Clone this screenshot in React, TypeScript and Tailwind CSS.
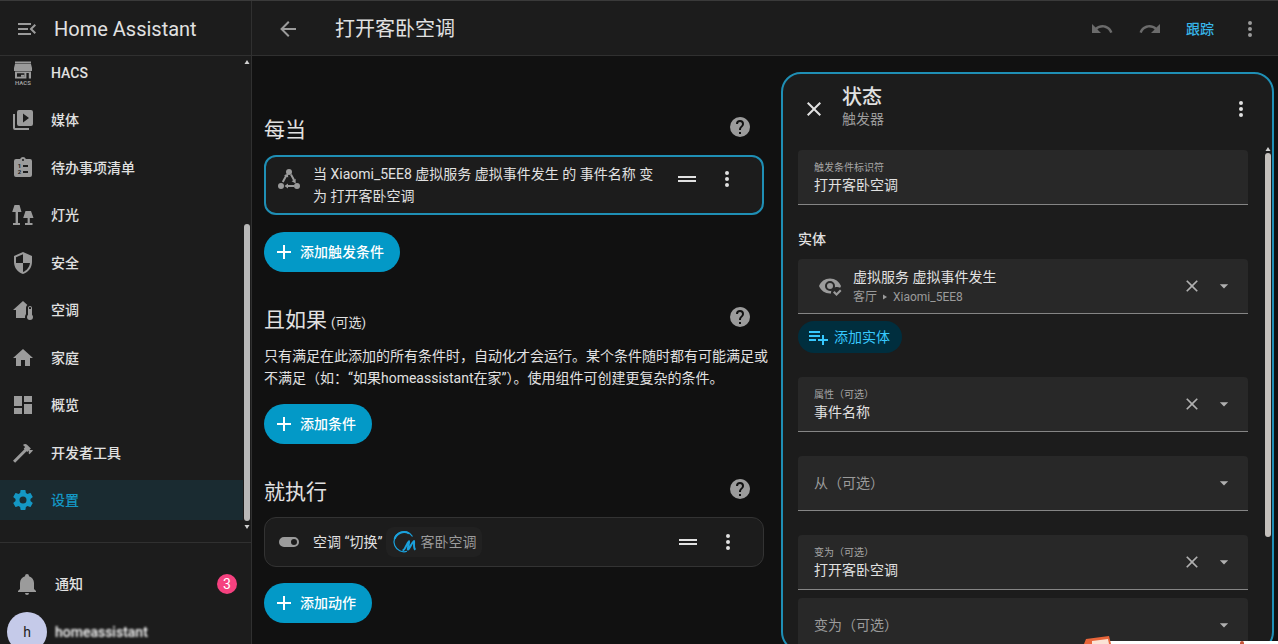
import type { ReactNode } from "react";

const PATHS = {
  menuOpen: "M21,15.61L19.59,17L14.58,12L19.59,7L21,8.39L17.44,12L21,15.61M3,6H16V8H3V6M3,13V11H13V13H3M3,18V16H16V18H3Z",
  media: "M4,6H2V20A2,2 0 0,0 4,22H18V20H4V6M20,2H8A2,2 0 0,0 6,4V16A2,2 0 0,0 8,18H20A2,2 0 0,0 22,16V4A2,2 0 0,0 20,2M12,14.5V5.5L18,10L12,14.5Z",
  lamps: "M3.5,2H8.5L10.5,9H7V20H9V22H2V20H4.6V9H1.2L3.5,2M14.5,8H20L22.5,15H18.8V20H21.5V22H14V20H16.6V15H12.2L14.5,8Z",
  security: "M12,12H19C18.47,16.11 15.72,19.78 12,20.92V12H5V6.3L12,3.19M12,1L3,5V11C3,16.55 6.84,21.73 12,23C17.16,21.73 21,16.55 21,11V5L12,1Z",
  climate: "M19,8C20.11,8 21,8.9 21,10V16.76C21.61,17.31 22,18.11 22,19A3,3 0 0,1 16,19C16,18.11 16.39,17.31 17,16.76V10C17,8.9 17.9,8 19,8M19,9C18.45,9 18,9.45 18,10V11H20V10C20,9.45 19.55,9 19,9M5,20V12H2L12,3L16.4,6.96C15.54,7.69 15,8.78 15,10V16C14.37,16.83 14,17.87 14,19L14.1,20H5Z",
  home: "M10,20V14H14V20H19V12H22L12,3L2,12H5V20H10Z",
  dashboard: "M13,3V9H21V3M13,21H21V11H13M3,21H11V15H3M3,13H11V3H3V13Z",
  hammer: "M2,19.63L13.43,8.2L12.72,7.5L14.14,6.07L12,3.89C13.2,2.7 15.09,2.7 16.27,3.89L19.87,7.5L18.45,8.91H21.29L22,9.62L18.45,13.21L17.74,12.5V9.62L16.27,11.04L15.56,10.33L4.13,21.76L2,19.63Z",
  cog: "M12,15.5A3.5,3.5 0 0,1 8.5,12A3.5,3.5 0 0,1 12,8.5A3.5,3.5 0 0,1 15.5,12A3.5,3.5 0 0,1 12,15.5M19.43,12.97C19.47,12.65 19.5,12.33 19.5,12C19.5,11.67 19.47,11.34 19.43,11L21.54,9.37C21.73,9.22 21.78,8.95 21.66,8.73L19.66,5.27C19.54,5.05 19.27,4.96 19.05,5.05L16.56,6.05C16.04,5.66 15.5,5.32 14.87,5.07L14.5,2.42C14.46,2.18 14.25,2 14,2H10C9.75,2 9.54,2.18 9.5,2.42L9.13,5.07C8.5,5.32 7.96,5.66 7.44,6.05L4.95,5.05C4.73,4.96 4.46,5.05 4.34,5.27L2.34,8.73C2.21,8.95 2.27,9.22 2.46,9.37L4.57,11C4.53,11.34 4.5,11.67 4.5,12C4.5,12.33 4.53,12.65 4.57,12.97L2.46,14.63C2.27,14.78 2.21,15.05 2.34,15.27L4.34,18.73C4.46,18.95 4.73,19.03 4.95,18.95L7.44,17.94C7.96,18.34 8.5,18.68 9.13,18.93L9.5,21.58C9.54,21.82 9.75,22 10,22H14C14.25,22 14.46,21.82 14.5,21.58L14.87,18.93C15.5,18.67 16.04,18.34 16.56,17.94L19.05,18.95C19.27,19.03 19.54,18.95 19.66,18.73L21.66,15.27C21.78,15.05 21.73,14.78 21.54,14.63L19.43,12.97Z",
  bell: "M21,19V20H3V19L5,17V11C5,7.9 7.03,5.17 10,4.29C10,4.19 10,4.1 10,4A2,2 0 0,1 12,2A2,2 0 0,1 14,4C14,4.1 14,4.19 14,4.29C16.97,5.17 19,7.9 19,11V17L21,19M14,21A2,2 0 0,1 12,23A2,2 0 0,1 10,21",
  back: "M20,11V13H8L13.5,18.5L12.08,19.92L4.16,12L12.08,4.08L13.5,5.5L8,11H20Z",
  undo: "M12.5,8C9.85,8 7.45,9 5.6,10.6L2,7V16H11L7.38,12.38C8.77,11.22 10.54,10.5 12.5,10.5C16.04,10.5 19.05,12.81 20.1,16L22.47,15.22C21.08,11.03 17.15,8 12.5,8Z",
  redo: "M18.4,10.6C16.55,9 14.15,8 11.5,8C6.85,8 2.92,11.03 1.54,15.22L3.9,16C4.95,12.81 7.95,10.5 11.5,10.5C13.45,10.5 15.23,11.22 16.62,12.38L13,16H22V7L18.4,10.6Z",
  dots: "M12,16A2,2 0 0,1 14,18A2,2 0 0,1 12,20A2,2 0 0,1 10,18A2,2 0 0,1 12,16M12,10A2,2 0 0,1 14,12A2,2 0 0,1 12,14A2,2 0 0,1 10,12A2,2 0 0,1 12,10M12,4A2,2 0 0,1 14,6A2,2 0 0,1 12,8A2,2 0 0,1 10,6A2,2 0 0,1 12,4Z",
  help: "M15.07,11.25L14.17,12.17C13.45,12.89 13,13.5 13,15H11V14.5C11,13.39 11.45,12.39 12.17,11.67L13.41,10.41C13.78,10.05 14,9.55 14,9C14,7.89 13.1,7 12,7A2,2 0 0,0 10,9H8A4,4 0 0,1 12,5A4,4 0 0,1 16,9C16,9.88 15.64,10.67 15.07,11.25M13,19H11V17H13M12,2A10,10 0 0,0 2,12A10,10 0 0,0 12,22A10,10 0 0,0 22,12C22,6.47 17.5,2 12,2Z",
  drag: "M21,11H3V9H21V11M21,13H3V15H21V13Z",
  toggle: "M17,7H7A5,5 0 0,0 2,12A5,5 0 0,0 7,17H17A5,5 0 0,0 22,12A5,5 0 0,0 17,7M17,15A3,3 0 0,1 14,12A3,3 0 0,1 17,9A3,3 0 0,1 20,12A3,3 0 0,1 17,15Z",
  close: "M19,6.41L17.59,5L12,10.59L6.41,5L5,6.41L10.59,12L5,17.59L6.41,19L12,13.41L17.59,19L19,17.59L13.41,12L19,6.41Z",
  eyeCheck: "M23.5,17L18.5,22L15,18.5L16.5,17L18.5,19L22,15.5L23.5,17M12,9A3,3 0 0,1 15,12A3,3 0 0,1 12,15A3,3 0 0,1 9,12A3,3 0 0,1 12,9M12,17C12.5,17 12.97,16.93 13.42,16.79C13.15,17.5 13,18.22 13,19V19.45L12,19.5C7,19.5 2.73,16.39 1,12C2.73,7.61 7,4.5 12,4.5C17,4.5 21.27,7.61 23,12C22.75,12.64 22.44,13.26 22.08,13.85C21.18,13.31 20.12,13 19,13C18.22,13 17.5,13.15 16.79,13.42C16.93,12.97 17,12.5 17,12A5,5 0 0,0 12,7A5,5 0 0,0 7,12A5,5 0 0,0 12,17Z",
  playlistPlus: "M3,16H10V14H3M18,14V10H16V14H12V16H16V20H18V16H22V14M14,6H3V8H14M14,10H3V12H14V10Z",
  menuDown: "M7,10L12,15L17,10H7Z",
  plus: "M19,13H13V19H11V13H5V11H11V5H13V11H19V13Z",
};

type IconName = keyof typeof PATHS;

function Icon({ name, className = "size-6" }: { name: IconName; className?: string }) {
  return (
    <svg viewBox="0 0 24 24" fill="currentColor" className={`shrink-0 ${className}`} aria-hidden="true">
      <path d={PATHS[name]} />
    </svg>
  );
}

function HacsIcon() {
  return (
    <svg viewBox="0 0 24 24" fill="currentColor" className="size-6 shrink-0" aria-hidden="true">
      <path d="M4,0.5H20V2.4H4ZM4,3H20L21,7V10H3V7Z" />
      <path fillRule="evenodd" d="M4,10.5H20V17.5H17.8V12H15.4V17.5H4ZM6,12.2V15.8H13.4V12.2Z" />
      <path d="M10,13.8H13.4V15.8H10Z" />
      <text x="12" y="23.6" textAnchor="middle" fontSize="6" fontWeight="700">HACS</text>
    </svg>
  );
}

function TodoIcon() {
  return (
    <svg viewBox="0 0 24 24" fill="currentColor" className="size-6 shrink-0" aria-hidden="true">
      <path fillRule="evenodd" d="M19,3H14.82C14.4,1.84 13.3,1 12,1C10.7,1 9.6,1.84 9.18,3H5A2,2 0 0,0 3,5V19A2,2 0 0,0 5,21H19A2,2 0 0,0 21,19V5A2,2 0 0,0 19,3M12,3A1,1 0 0,1 13,4A1,1 0 0,1 12,5A1,1 0 0,1 11,4A1,1 0 0,1 12,3M12,9H17V11H12ZM12,15H17V17H12Z" />
      <text x="8.5" y="12.2" textAnchor="middle" fontSize="6" fontWeight="700" fill="#1c1c1c">1</text>
      <text x="8.5" y="18.2" textAnchor="middle" fontSize="6" fontWeight="700" fill="#1c1c1c">2</text>
    </svg>
  );
}

function StateIcon() {
  return (
    <svg viewBox="0 0 24 24" fill="currentColor" className="size-6 shrink-0" aria-hidden="true">
      <circle cx="12" cy="5" r="3" />
      <circle cx="4" cy="19" r="3" />
      <circle cx="20" cy="19" r="3" />
      <path d="M9.6,8L5.8,15M14,7.5L17,13M17,19H10" fill="none" stroke="currentColor" strokeWidth="2" />
      <path d="M11,6.4L11.2,10.6L7,8.4ZM18.7,16.4L14.6,14.2L18.6,11.7ZM7.5,19L11,16.5V21.5Z" />
    </svg>
  );
}

function MideaLogo() {
  return (
    <svg viewBox="0 0 24 24" className="size-6 shrink-0" fill="none" stroke="#1ba1dc" aria-hidden="true">
      <path d="M20.5,6.5A10,10 0 1,0 15,21.3" strokeWidth="1.2" />
      <path d="M17,3.3A10,10 0 0,0 2.6,9" strokeWidth="2" />
      <path d="M10.5,20.5C13.5,20 14.5,13 17,11.2C17.6,13 15.4,17.5 15.8,19.6C18,19 19.5,12.5 22,11C22.5,13.5 21,18 23.4,19.8" strokeWidth="2" strokeLinejoin="round" />
    </svg>
  );
}

const NAV: { label: string; icon: ReactNode; active?: boolean }[] = [
  { label: "HACS", icon: <HacsIcon /> },
  { label: "媒体", icon: <Icon name="media" /> },
  { label: "待办事项清单", icon: <TodoIcon /> },
  { label: "灯光", icon: <Icon name="lamps" /> },
  { label: "安全", icon: <Icon name="security" /> },
  { label: "空调", icon: <Icon name="climate" /> },
  { label: "家庭", icon: <Icon name="home" /> },
  { label: "概览", icon: <Icon name="dashboard" /> },
  { label: "开发者工具", icon: <Icon name="hammer" /> },
  { label: "设置", icon: <Icon name="cog" />, active: true },
];

function Arrow({ down = false }: { down?: boolean }) {
  return (
    <svg viewBox="0 0 6 4" className="h-1 w-1.5 shrink-0 text-[#d0d0d0]" fill="currentColor" aria-hidden="true">
      <path d={down ? "M0.5,0H5.5L3,4Z" : "M0.5,4H5.5L3,0Z"} />
    </svg>
  );
}

function Sidebar() {
  return (
    <aside className="flex w-[252px] shrink-0 flex-col border-r border-[#303030] bg-[#1c1c1c]">
      <div className="flex h-14 shrink-0 items-center gap-[15px] border-b border-[#303030] pt-0.5 pl-[15px]">
        <button aria-label="收起侧边栏" className="text-[#9b9b9b]">
          <Icon name="menuOpen" />
        </button>
        <h1 className="text-xl">Home Assistant</h1>
      </div>
      <nav className="flex min-h-0 flex-1 overflow-hidden">
        <ul className="-mt-[3px] mb-[22px] flex flex-1 flex-col justify-between">
          {NAV.map((item) => (
            <li key={item.label}>
              <a
                href="#"
                className={`flex h-10 items-center gap-4 pl-[11px] text-sm font-medium ${
                  item.active ? "bg-[#1a2b31] text-[#1497c4]" : ""
                }`}
              >
                <span className={item.active ? "text-[#1497c4]" : "text-[#9b9b9b]"}>{item.icon}</span>
                {item.label}
              </a>
            </li>
          ))}
        </ul>
        <div className="flex w-2 flex-col items-center pt-1 pb-[13px]">
          <Arrow />
          <div className="mt-40 mb-1 w-1.5 flex-1 rounded-full bg-[#b8b8b8]" />
          <Arrow down />
        </div>
      </nav>
      <div className="h-[102px] shrink-0 overflow-hidden border-t border-[#303030] pt-[19px]">
        <a href="#" className="flex h-11 items-center pl-[15px] pr-3.5 text-sm font-medium">
          <Icon name="bell" className="size-6 text-[#9b9b9b]" />
          <span className="ml-4 flex-1">通知</span>
          <span className="flex size-5 items-center justify-center rounded-full bg-[#f5417f] text-sm font-normal text-white">3</span>
        </a>
        <a href="#" className="mt-1 flex h-11 items-center gap-2 pl-[7px] text-sm font-medium">
          <span className="flex size-10 items-center justify-center rounded-full bg-[#c5cae9] font-normal text-[#212121]">h</span>
          <span className="text-white blur-[1px]">homeassistant</span>
        </a>
      </div>
    </aside>
  );
}

function SectionTitle({ title, optional = false }: { title: string; optional?: boolean }) {
  return (
    <div className="mb-2.5 flex h-[30px] items-start justify-between pr-3">
      <h2 className="text-[21px] leading-[30px]">
        {title}
        {optional && <span className="ml-1 text-[13px]">(可选)</span>}
      </h2>
      <button aria-label="帮助" className="text-[#9b9b9b]">
        <Icon name="help" />
      </button>
    </div>
  );
}

function AddButton({ label }: { label: string }) {
  return (
    <button className="flex h-10 items-center gap-1 rounded-full bg-[#0399c7] pl-2 pr-4 text-sm font-medium text-white">
      <Icon name="plus" />
      <span>{label}</span>
    </button>
  );
}

function RowActions() {
  return (
    <div className="flex shrink-0 gap-4 pr-[23px]">
      <button aria-label="拖动">
        <Icon name="drag" />
      </button>
      <button aria-label="更多">
        <Icon name="dots" />
      </button>
    </div>
  );
}

function Automation() {
  return (
    <div className="flex min-w-0 flex-col pt-[59px]">
      <section className="flex flex-col">
        <SectionTitle title="每当" />
        <div className="flex items-center rounded-xl border-2 border-[#1f8fb5] bg-[#1c1c1c] py-1.5 pl-[11px]">
          <span className="-mt-3 text-[#9b9b9b]">
            <StateIcon />
          </span>
          <p className="ml-3 flex-1 pr-4 text-sm leading-[22px]">当 Xiaomi_5EE8 虚拟服务 虚拟事件发生 的 事件名称 变为 打开客卧空调</p>
          <div className="-mt-3">
            <RowActions />
          </div>
        </div>
        <div className="mt-[17px] flex">
          <AddButton label="添加触发条件" />
        </div>
      </section>

      <section className="mt-[33px] flex flex-col">
        <SectionTitle title="且如果" optional />
        <p className="text-sm leading-[22px] whitespace-nowrap">
          只有满足在此添加的所有条件时，自动化才会运行。某个条件随时都有可能满足或
          <br />
          不满足（如：“如果homeassistant在家”）。使用组件可创建更复杂的条件。
        </p>
        <div className="mt-[15px] flex">
          <AddButton label="添加条件" />
        </div>
      </section>

      <section className="mt-[33px] flex flex-col">
        <SectionTitle title="就执行" />
        <div className="flex items-center rounded-xl border border-[#333333] bg-[#1c1c1c] py-[9px] pl-3">
          <span className="text-[#9b9b9b]">
            <Icon name="toggle" />
          </span>
          <p className="ml-3 text-sm">空调 “切换”</p>
          <span className="ml-1 flex h-[30px] items-center gap-1 rounded-lg bg-[#212121] px-1.5 text-sm text-[#9b9b9b]">
            <MideaLogo />
            客卧空调
          </span>
          <div className="ml-auto">
            <RowActions />
          </div>
        </div>
        <div className="mt-4 flex">
          <AddButton label="添加动作" />
        </div>
      </section>
    </div>
  );
}

const FIELD = "flex h-[55px] shrink-0 items-center rounded-t border-b border-[#858585] bg-[#282828] pl-4 pr-3.5";

function FieldIcons({ clearable = true }: { clearable?: boolean }) {
  return (
    <div className="flex shrink-0 gap-3 text-[#b0b0b0]">
      {clearable && (
        <button aria-label="清除">
          <Icon name="close" className="size-5" />
        </button>
      )}
      <button aria-label="展开">
        <Icon name="menuDown" className="size-5" />
      </button>
    </div>
  );
}

function Field({ id, label, value, combo = false }: { id: string; label: string; value?: string; combo?: boolean }) {
  return (
    <div className={FIELD}>
      <div className="flex min-w-0 flex-1 flex-col">
        {value && (
          <label htmlFor={id} className="pt-px text-[10px] leading-[14px] text-[#a5a5a5]">
            {label}
          </label>
        )}
        <input
          id={id}
          aria-label={label}
          defaultValue={value}
          placeholder={value ? undefined : label}
          className="h-5 w-full bg-transparent text-sm outline-none placeholder:text-[#9b9b9b]"
        />
      </div>
      {combo && <FieldIcons clearable={Boolean(value)} />}
    </div>
  );
}

function TriggerPanel() {
  return (
    <div className="mt-4 -mb-2 flex min-h-0 min-w-0 flex-col overflow-hidden rounded-[20px] border-2 border-[#1f8fb5] bg-[#1c1c1c]">
      <div className="flex h-[73px] shrink-0 items-center px-[19px] pb-1">
        <button aria-label="关闭">
          <Icon name="close" />
        </button>
        <div className="ml-4 flex-1 pb-1">
          <h2 className="text-xl leading-6 font-medium">状态</h2>
          <p className="text-sm leading-5 text-[#9b9b9b]">触发器</p>
        </div>
        <button aria-label="更多">
          <Icon name="dots" />
        </button>
      </div>
      <div className="flex min-h-0 flex-1 overflow-hidden">
        <div className="flex min-w-0 flex-1 flex-col pt-[3px] pl-[15px] pr-4">
          <Field id="trigger-id" label="触发条件标识符" value="打开客卧空调" />
          <h3 className="mt-6 text-sm leading-5 font-medium">实体</h3>
          <div className={`${FIELD} mt-[10px]`}>
            <span className="ml-1 text-[#9b9b9b]">
              <Icon name="eyeCheck" />
            </span>
            <div className="ml-[11px] flex-1 pt-px">
              <div className="text-sm leading-5">虚拟服务 虚拟事件发生</div>
              <div className="flex items-center gap-1.5 text-xs leading-5 text-[#9b9b9b]">
                客厅
                <svg viewBox="0 0 4 6" className="h-1.5 w-1" fill="currentColor" aria-hidden="true">
                  <path d="M0,0.5L4,3L0,5.5Z" />
                </svg>
                Xiaomi_5EE8
              </div>
            </div>
            <FieldIcons />
          </div>
          <button className="mt-[7px] flex h-8 shrink-0 items-center gap-1 self-start rounded-full bg-[#002e3e] pl-2 pr-3 text-sm text-[#37c8fd]">
            <Icon name="playlistPlus" />
            <span>添加实体</span>
          </button>
          <div className="mt-6 flex flex-col gap-6">
            <Field id="attribute" label="属性（可选）" value="事件名称" combo />
            <Field id="from" label="从（可选）" combo />
            <Field id="to" label="变为（可选）" value="打开客卧空调" combo />
          </div>
          <div className="mt-2">
            <Field id="to-extra" label="变为（可选）" combo />
          </div>
        </div>
        <div className="flex w-2 flex-col items-center">
          <Arrow />
          <div className="mt-0.5 h-[384px] w-1.5 rounded-full bg-[#c4c0bc]" />
        </div>
      </div>
    </div>
  );
}

export default function App() {
  return (
    <div className="relative flex h-screen overflow-hidden bg-[#111111] font-[Roboto,'Noto_Sans_CJK_SC',sans-serif] text-[#e1e1e1]">
      <Sidebar />
      <main className="flex min-w-0 flex-1 flex-col">
        <header className="flex h-14 shrink-0 items-center border-b border-[#303030] bg-[#1c1c1c] pt-0.5 pl-6 pr-4 text-[#9b9b9b]">
          <button aria-label="返回">
            <Icon name="back" />
          </button>
          <h1 className="ml-[35px] flex-1 text-xl text-[#e1e1e1]">打开客卧空调</h1>
          <div className="flex items-center gap-6">
            <button aria-label="撤销" className="text-[#6b6b6b]">
              <Icon name="undo" />
            </button>
            <button aria-label="重做" className="text-[#6b6b6b]">
              <Icon name="redo" />
            </button>
            <button className="text-sm font-medium text-[#37b5e8]">跟踪</button>
            <button aria-label="更多">
              <Icon name="dots" />
            </button>
          </div>
        </header>
        <div className="grid min-h-0 flex-1 grid-cols-[500fr_493fr] grid-rows-[minmax(0,1fr)] gap-[17px] pl-3 pr-1">
          <Automation />
          <TriggerPanel />
        </div>
      </main>
      <div className="absolute inset-x-0 top-0 h-px bg-[#3a3a3a]" />
      <div className="absolute right-0 bottom-0 z-10 h-[3px] w-[180px] bg-white" />
      <svg viewBox="0 0 28 8" className="absolute right-[166px] bottom-0 z-20 h-2 w-7" aria-hidden="true">
        <path d="M2,3L25,0L27,8H0Z" fill="#e8653a" />
        <path d="M8,5L24,3L25,8H8Z" fill="#fbe3d6" />
      </svg>
      <div className="absolute right-[34px] bottom-0 z-20 h-[3px] w-1 rounded-t-full bg-[#c8553a]" />
    </div>
  );
}
